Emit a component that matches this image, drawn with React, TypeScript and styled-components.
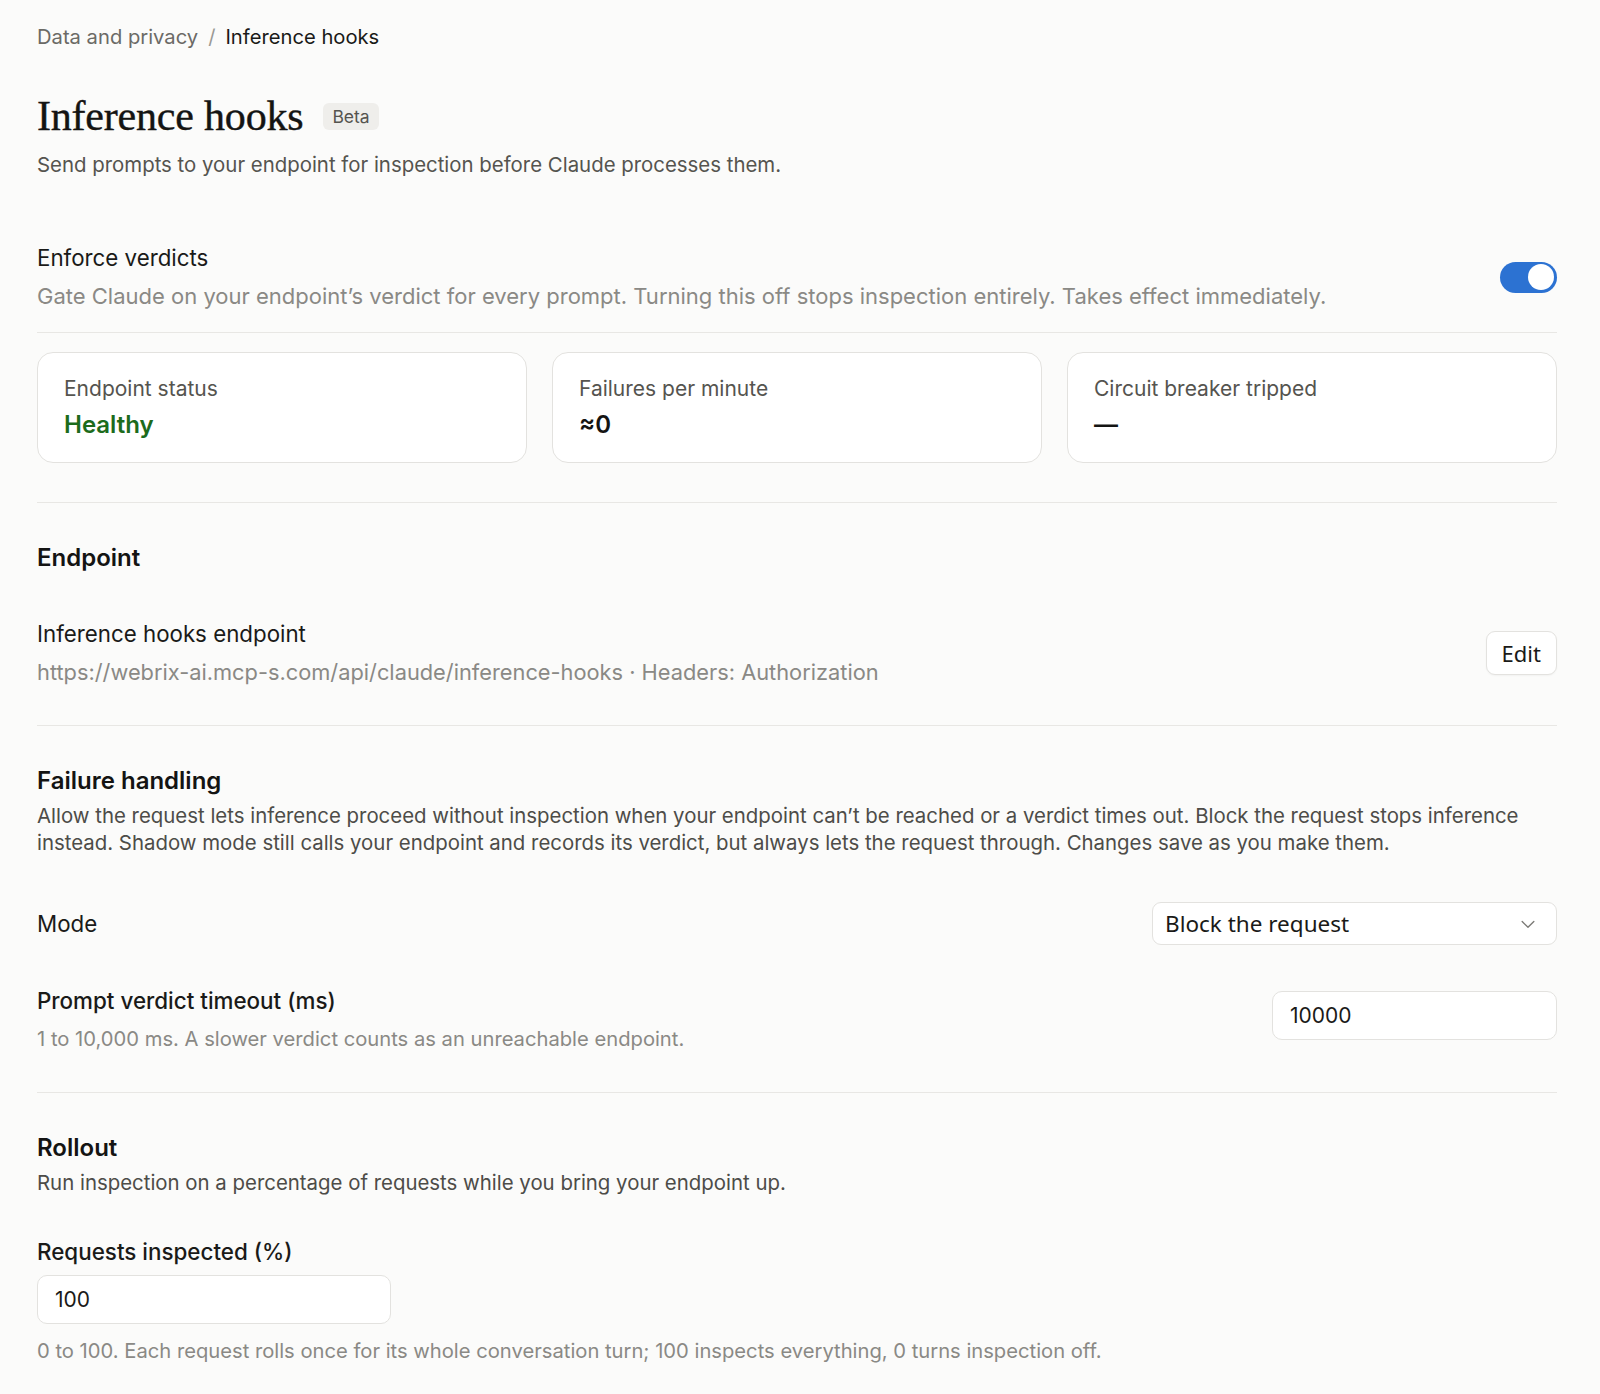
import React, { ReactElement } from 'react'
import styled, { createGlobalStyle } from 'styled-components'

const GlobalStyle = createGlobalStyle`
  body {
    margin: 0;
    background: #fbfbfa;
    color: #1a1a18;
    font-family: Inter, 'Noto Sans', sans-serif;
  }
`

type Stat = { label: string; value: string; tone?: 'good' }

const stats: Stat[] = [
  { label: 'Endpoint status', value: 'Healthy', tone: 'good' },
  { label: 'Failures per minute', value: '≈0' },
  { label: 'Circuit breaker tripped', value: '—' },
]

const ChevronDown = (): ReactElement => (
  <svg width="20" height="20" viewBox="0 0 24 24" fill="none" stroke="#7a7975" strokeWidth="1.6" strokeLinecap="round" strokeLinejoin="round">
    <path d="M5 9l7 7 7-7" />
  </svg>
)

const App: React.FC = (): ReactElement => {
  return (
    <>
      <GlobalStyle />
      <Page>
        <Breadcrumb>
          <Crumb>Data and privacy</Crumb>
          <Sep>/</Sep>
          <Crumb current>Inference hooks</Crumb>
        </Breadcrumb>

        <TitleRow>
          <Title>Inference hooks</Title>
          <Badge>Beta</Badge>
        </TitleRow>
        <Subtitle>Send prompts to your endpoint for inspection before Claude processes them.</Subtitle>

        <ToggleRow>
          <div>
            <RowLabel>Enforce verdicts</RowLabel>
            <MutedText>
              Gate Claude on your endpoint’s verdict for every prompt. Turning this off stops inspection entirely. Takes effect immediately.
            </MutedText>
          </div>
          <Switch role="switch" aria-checked="true">
            <Knob />
          </Switch>
        </ToggleRow>

        <StatGrid>
          {stats.map((s) => (
            <StatCard key={s.label}>
              <StatLabel>{s.label}</StatLabel>
              <StatValue tone={s.tone}>{s.value}</StatValue>
            </StatCard>
          ))}
        </StatGrid>

        <Section>
          <SectionTitle>Endpoint</SectionTitle>
          <EndpointRow>
            <div>
              <RowLabel>Inference hooks endpoint</RowLabel>
              <MutedText small>https://webrix-ai.mcp-s.com/api/claude/inference-hooks · Headers: Authorization</MutedText>
            </div>
            <EditButton>Edit</EditButton>
          </EndpointRow>
        </Section>

        <Section>
          <SectionTitle>Failure handling</SectionTitle>
          <SectionText>
            Allow the request lets inference proceed without inspection when your endpoint can’t be reached or a verdict times out. Block the request stops inference instead. Shadow mode still calls your endpoint and records its verdict, but always lets the request through. Changes save as you make them.
          </SectionText>

          <ModeRow>
            <RowLabel>Mode</RowLabel>
            <Select>
              <span>Block the request</span>
              <ChevronDown />
            </Select>
          </ModeRow>

          <TimeoutRow>
            <TimeoutText>
              <FieldLabel>Prompt verdict timeout (ms)</FieldLabel>
              <Hint>1 to 10,000 ms. A slower verdict counts as an unreachable endpoint.</Hint>
            </TimeoutText>
            <TextInput width={285} defaultValue="10000" />
          </TimeoutRow>
        </Section>

        <Section last>
          <SectionTitle>Rollout</SectionTitle>
          <SectionText>Run inspection on a percentage of requests while you bring your endpoint up.</SectionText>
          <RolloutField>
            <FieldLabel>Requests inspected (%)</FieldLabel>
            <TextInput width={354} defaultValue="100" />
            <Hint>0 to 100. Each request rolls once for its whole conversation turn; 100 inspects everything, 0 turns inspection off.</Hint>
          </RolloutField>
        </Section>
      </Page>
    </>
  )
}

const Page = styled.main`
  width: 1520px;
  margin-left: 37px;
  padding: 23px 0 30px;
`

const Breadcrumb = styled.nav`
  display: flex;
  align-items: center;
  gap: 10px;
  font-size: 20.2px;
  line-height: 28px;
`

const Crumb = styled.span<{ current?: boolean }>`
  color: ${({ current }) => (current ? '#1a1a18' : '#6b6a66')};
`

const Sep = styled.span`
  color: #9a9994;
`

const TitleRow = styled.div`
  display: flex;
  align-items: center;
  gap: 20px;
  margin-top: 41px;
`

const Title = styled.h1`
  margin: 0;
  font-family: 'Liberation Serif', serif;
  font-weight: 400;
  font-size: 42px;
  line-height: 48px;
  color: #141413;
  letter-spacing: -0.2px;
  -webkit-text-stroke: 0.4px #141413;
`

const Badge = styled.span`
  display: inline-flex;
  align-items: center;
  height: 27px;
  padding: 0 9px;
  border-radius: 6px;
  background: #efeeeb;
  color: #55544f;
  font-size: 17.5px;
`

const Subtitle = styled.p`
  margin: 11px 0 0;
  font-size: 20.4px;
  line-height: 28px;
  color: #55544f;
`

const ToggleRow = styled.div`
  display: flex;
  align-items: center;
  justify-content: space-between;
  margin-top: 65px;
  padding-bottom: 22px;
  border-bottom: 1px solid #e8e7e4;
`

const RowLabel = styled.div`
  font-size: 22.3px;
  line-height: 28px;
  color: #1a1a18;
`

const MutedText = styled.div<{ small?: boolean }>`
  margin-top: 10px;
  font-size: ${({ small }) => (small ? '21.8px' : '22px')};
  line-height: 28px;
  color: #8a8985;
`

const Switch = styled.span`
  display: flex;
  align-items: center;
  justify-content: flex-end;
  width: 57px;
  height: 31px;
  padding: 0 3px;
  box-sizing: border-box;
  border-radius: 16px;
  background: #2c72d2;
`

const Knob = styled.span`
  width: 26px;
  height: 26px;
  border-radius: 50%;
  background: #ffffff;
`

const StatGrid = styled.div`
  display: grid;
  grid-template-columns: repeat(3, 1fr);
  gap: 25px;
  margin-top: 19px;
  padding-bottom: 39px;
  border-bottom: 1px solid #e8e7e4;
`

const StatCard = styled.div`
  height: 111px;
  box-sizing: border-box;
  padding: 22px 26px 0;
  border: 1px solid #e3e2df;
  border-radius: 16px;
  background: #ffffff;
`

const StatLabel = styled.div`
  font-size: 21px;
  line-height: 28px;
  color: #55544f;
`

const StatValue = styled.div<{ tone?: 'good' }>`
  margin-top: 7px;
  font-size: 24px;
  line-height: 30px;
  font-weight: 600;
  color: ${({ tone }) => (tone === 'good' ? '#1c6b1c' : '#141413')};
`

const Section = styled.section<{ last?: boolean }>`
  padding: 40px 0 ${({ last }) => (last ? '0' : '39px')};
  border-bottom: ${({ last }) => (last ? 'none' : '1px solid #e8e7e4')};
`

const SectionTitle = styled.h2`
  margin: 0;
  font-size: 24px;
  line-height: 30px;
  font-weight: 600;
  color: #141413;
`

const SectionText = styled.p`
  margin: 6px 0 0;
  font-size: 20.4px;
  line-height: 27px;
  color: #4d4c48;
`

const EndpointRow = styled.div`
  display: flex;
  align-items: center;
  justify-content: space-between;
  margin-top: 47px;
`

const EditButton = styled.button`
  height: 44px;
  padding: 0 15px;
  border: 1px solid #e3e2df;
  border-radius: 9px;
  background: #ffffff;
  font-family: 'Noto Sans', sans-serif;
  font-size: 22px;
  color: #1a1a18;
  box-shadow: 0 1px 2px rgba(0, 0, 0, 0.04);
`

const ModeRow = styled.div`
  display: flex;
  align-items: center;
  justify-content: space-between;
  margin-top: 46px;
`

const Select = styled.div`
  display: flex;
  align-items: center;
  justify-content: space-between;
  width: 405px;
  height: 43px;
  box-sizing: border-box;
  padding: 0 18px 0 12px;
  border: 1px solid #e3e2df;
  border-radius: 9px;
  background: #ffffff;
  font-family: 'Noto Sans', sans-serif;
  font-size: 22.5px;
  color: #1a1a18;
`

const TimeoutRow = styled.div`
  display: flex;
  align-items: flex-start;
  justify-content: space-between;
  margin-top: 42px;

  input {
    margin-top: 4px;
  }
`

const TimeoutText = styled.div`
  display: flex;
  flex-direction: column;
  gap: 10px;
`

const FieldLabel = styled.div`
  font-size: 22.4px;
  line-height: 28px;
  font-weight: 500;
  color: #1a1a18;
`

const TextInput = styled.input<{ width: number }>`
  width: ${({ width }) => width}px;
  height: 49px;
  box-sizing: border-box;
  padding: 0 17px;
  border: 1px solid #e3e2df;
  border-radius: 10px;
  background: #ffffff;
  font-family: inherit;
  font-size: 21px;
  color: #1a1a18;
  outline: none;
`

const RolloutField = styled.div`
  display: flex;
  flex-direction: column;
  align-items: flex-start;
  gap: 9px;
  margin-top: 42px;

  input + div {
    margin-top: 4px;
  }
`

const Hint = styled.div`
  font-size: 20.2px;
  line-height: 28px;
  color: #8a8985;
`

export default App
